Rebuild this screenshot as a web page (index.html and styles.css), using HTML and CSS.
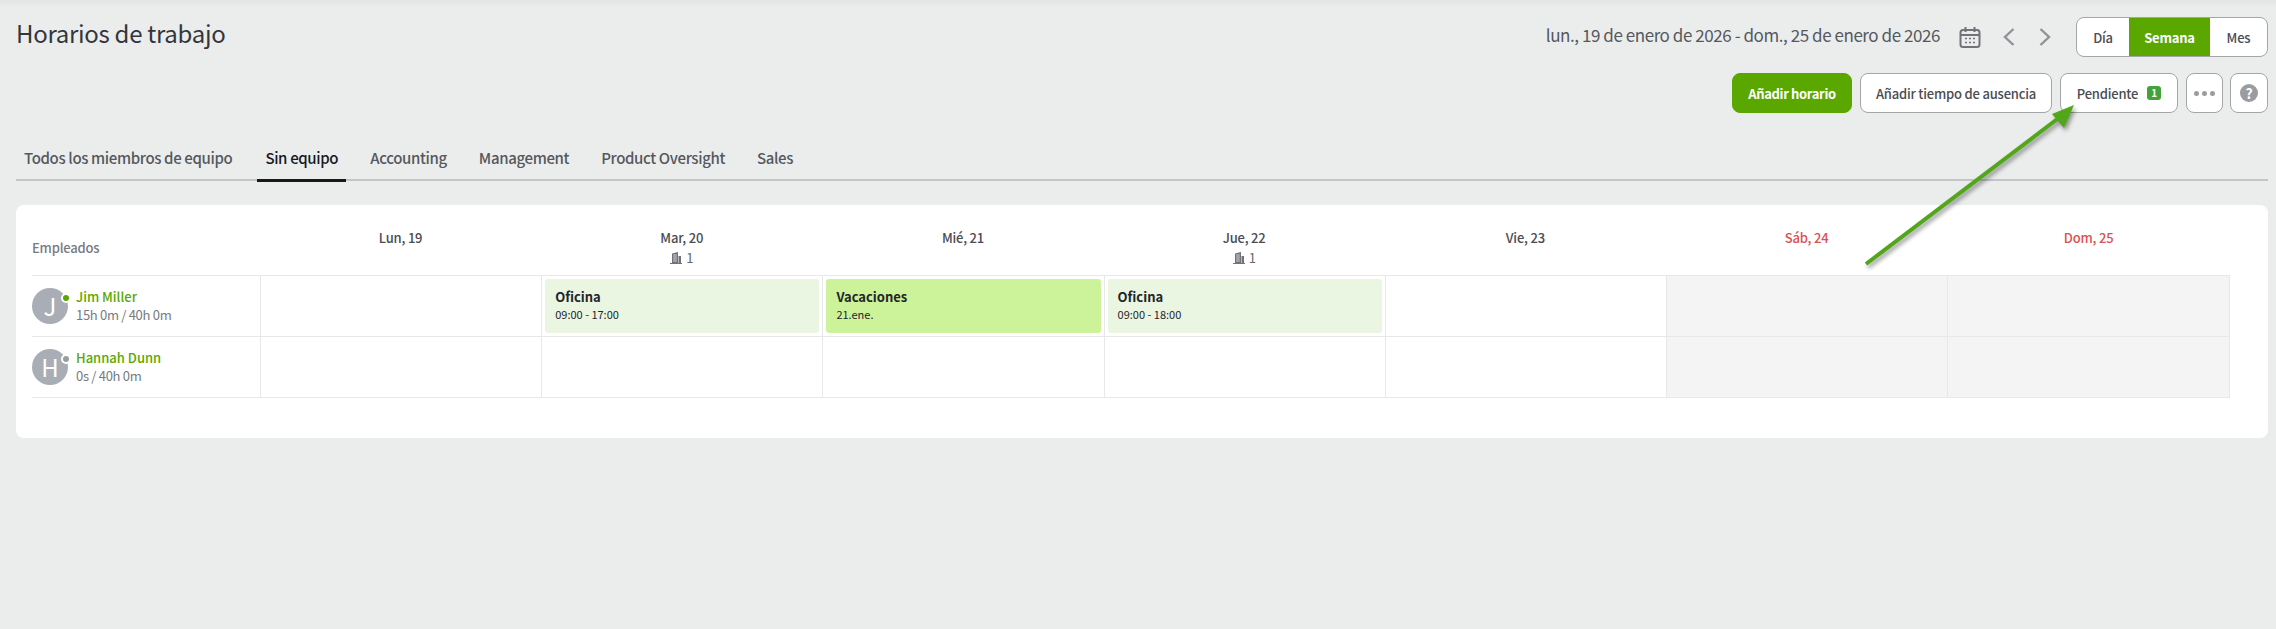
FILE: index.html
```html
<!DOCTYPE html>
<html lang="es">
<head>
    <meta charset="UTF-8" />
    <meta name="viewport" content="width=device-width, initial-scale=1" />
    <title>Horarios de trabajo</title>
    <link rel="stylesheet" href="styles.css">
</head>
<body>
<div class="page">
    <div class="top-row">
        <h1>Horarios de trabajo</h1>
        <div class="date-nav">
            <span class="date-range">lun., 19 de enero de 2026 - dom., 25 de enero de 2026</span>
            <svg class="cal-icon" width="22" height="22" viewBox="0 0 22 22" fill="none" stroke="#707378" stroke-width="2">
                <rect x="1.5" y="4" width="19" height="17" rx="2.5" />
                <path d="M1.5 9h19M6.5 1v5M15.5 1v5" />
                <path d="M6 12.5h2M10 12.5h2M14 12.5h2M6 16.5h2M10 16.5h2M14 16.5h2" stroke-width="1.5" />
            </svg>
            <svg class="chev" width="12" height="18" viewBox="0 0 12 18" fill="none" stroke="#8f9296" stroke-width="2.4"><path d="M10.5 1L2 9l8.5 8" /></svg>
            <svg class="chev chev-next" width="12" height="18" viewBox="0 0 12 18" fill="none" stroke="#8f9296" stroke-width="2.4"><path d="M1.5 1L10 9l-8.5 8" /></svg>
            <div class="segment">
                <div class="seg seg-day">Día</div>
                <div class="seg seg-week active">Semana</div>
                <div class="seg seg-month">Mes</div>
            </div>
        </div>
    </div>

    <div class="actions">
        <button class="btn primary btn-add">Añadir horario</button>
        <button class="btn btn-absence">Añadir tiempo de ausencia</button>
        <button class="btn btn-pending">Pendiente <span class="badge">1</span></button>
        <button class="btn btn-more"><i></i><i></i><i></i></button>
        <button class="btn btn-help"><span class="help-dot">?</span></button>
    </div>

    <div class="tabs">
        <div class="tab tab-all">Todos los miembros de equipo</div>
        <div class="tab active">Sin equipo</div>
        <div class="tab">Accounting</div>
        <div class="tab">Management</div>
        <div class="tab">Product Oversight</div>
        <div class="tab">Sales</div>
    </div>

    <div class="card">
        <div class="schedule">
            <div class="head head-emp">Empleados</div>
            <div class="head">Lun, 19</div>
            <div class="head">Mar, 20
                <div class="office">
                    <svg width="12" height="12" viewBox="0 0 12 12" fill="#707378"><path d="M2 1.5L8 0v12H2zM8.5 4H11v8H8.5zM0 11h12v1H0z" /><path d="M3.2 3h3.6M3.2 5h3.6M3.2 7h3.6M3.2 9h3.6" stroke="#fff" stroke-width=".7" /></svg>
                    1
                </div>
            </div>
            <div class="head">Mié, 21</div>
            <div class="head">Jue, 22
                <div class="office">
                    <svg width="12" height="12" viewBox="0 0 12 12" fill="#707378"><path d="M2 1.5L8 0v12H2zM8.5 4H11v8H8.5zM0 11h12v1H0z" /><path d="M3.2 3h3.6M3.2 5h3.6M3.2 7h3.6M3.2 9h3.6" stroke="#fff" stroke-width=".7" /></svg>
                    1
                </div>
            </div>
            <div class="head">Vie, 23</div>
            <div class="head weekend-head">Sáb, 24</div>
            <div class="head weekend-head">Dom, 25</div>

            <div class="cell emp">
                <div class="avatar">J<span class="status online"></span></div>
                <div>
                    <div class="emp-name">Jim Miller</div>
                    <div class="emp-hours">15h 0m / 40h 0m</div>
                </div>
            </div>
            <div class="cell"></div>
            <div class="cell"><div class="shift"><b>Oficina</b><span>09:00 - 17:00</span></div></div>
            <div class="cell"><div class="shift vacation"><b>Vacaciones</b><span>21.ene.</span></div></div>
            <div class="cell"><div class="shift"><b>Oficina</b><span>09:00 - 18:00</span></div></div>
            <div class="cell"></div>
            <div class="cell weekend"></div>
            <div class="cell weekend last"></div>

            <div class="cell emp">
                <div class="avatar">H<span class="status"></span></div>
                <div>
                    <div class="emp-name">Hannah Dunn</div>
                    <div class="emp-hours">0s / 40h 0m</div>
                </div>
            </div>
            <div class="cell"></div>
            <div class="cell"></div>
            <div class="cell"></div>
            <div class="cell"></div>
            <div class="cell"></div>
            <div class="cell weekend"></div>
            <div class="cell weekend last"></div>
        </div>
    </div>
</div>

<!-- annotation arrow drawn over the screenshot -->
<svg class="arrow" width="2276" height="629" viewBox="0 0 2276 629">
    <path d="M1866 264L2060 117" stroke="#52a61a" stroke-width="4" fill="none" />
    <path d="M2074 105L2052 114L2064 128z" fill="#52a61a" />
</svg>
</body>
</html>
```

FILE: styles.css
```css
* {
  box-sizing: border-box;
}
body {
  margin: 0;
  height: 629px;
  overflow: hidden;
  font-family: "Noto Sans CJK SC", "Noto Sans", sans-serif;
  background: linear-gradient(#e3e4e4, #ebeded 8px);
  color: #4a4d52;
}
.page {
  padding: 17px 8px 0 16px;
}
.top-row {
  display: flex;
  justify-content: space-between;
  height: 40px;
}
h1 {
  margin: 0;
  font-size: 24px;
  font-weight: 400;
  line-height: 31px;
  letter-spacing: -0.3px;
  color: #33363b;
}
.date-nav {
  display: flex;
  align-items: center;
}
.date-range {
  font-size: 17px;
  letter-spacing: -0.44px;
  color: #55585d;
  margin-top: -5px;
}
.cal-icon {
  margin: -1px 0 0 19px;
}
.chev {
  margin: -1px 0 0 22px;
}
.chev-next {
  margin-left: 24px;
}
.segment {
  display: flex;
  height: 40px;
  margin-left: 25px;
  border: 1px solid #a3a5a8;
  border-radius: 8px;
  background: #fff;
  overflow: hidden;
}
.seg {
  display: flex;
  align-items: center;
  justify-content: center;
  font-size: 13px;
  font-weight: 500;
  letter-spacing: -0.2px;
}
.seg-day { width: 52px; }
.seg-week { width: 81px; }
.seg-month { width: 57px; }
.seg.active {
  background: #5aa700;
  color: #fff;
  font-weight: 700;
}
.actions {
  display: flex;
  justify-content: flex-end;
  gap: 8px;
  margin-top: 16px;
}
.btn {
  display: flex;
  align-items: center;
  justify-content: center;
  height: 40px;
  padding: 0;
  border: 1px solid #a3a5a8;
  border-radius: 8px;
  background: #fff;
  font-family: inherit;
  font-size: 13px;
  font-weight: 500;
  letter-spacing: -0.2px;
  color: #4a4d52;
}
.btn.primary {
  background: #5aa700;
  border-color: #5aa700;
  color: #fff;
  font-weight: 700;
  letter-spacing: -0.35px;
}
.btn-add { width: 120px; }
.btn-absence { width: 192px; }
.btn-pending { width: 118px; }
.btn-more { width: 37px; gap: 3px; }
.btn-help { width: 38px; margin-left: -1px; }
.btn-more i {
  width: 5px;
  height: 5px;
  border-radius: 50%;
  background: #9a9c9f;
}
.badge {
  width: 14px;
  height: 14px;
  margin-left: 9px;
  border-radius: 3px;
  background: #43a23c;
  color: #fff;
  font-size: 10px;
  font-weight: 700;
  line-height: 14px;
}
.help-dot {
  width: 18px;
  height: 18px;
  border-radius: 50%;
  background: #9a9c9f;
  color: #fff;
  font-size: 14px;
  font-weight: 700;
  line-height: 18px;
}
.tabs {
  display: flex;
  gap: 16px;
  height: 68px;
  padding-top: 31px;
  border-bottom: 2px solid #c2c4c8;
}
.tab {
  height: 38px;
  padding: 0 8px;
  font-size: 15px;
  font-weight: 500;
  line-height: 28px;
  letter-spacing: -0.36px;
  color: #55585d;
}
.tab-all {
  margin-right: 1px;
}
.tab.active {
  border-bottom: 3px solid #16181d;
  color: #16181d;
}
.card {
  height: 233px;
  margin-top: 24px;
  padding: 0 38px 0 16px;
  border-radius: 8px;
  background: #fff;
}
.schedule {
  display: grid;
  grid-template-columns: 228px repeat(6, 281.2px) 1fr;
  grid-template-rows: 71px 61px 61px;
}
.head {
  padding-top: 23px;
  font-size: 13px;
  font-weight: 500;
  line-height: 20px;
  letter-spacing: -0.2px;
  text-align: center;
  color: #4a4d52;
  border-bottom: 1px solid #e8e8e8;
}
.head-emp {
  padding-top: 33px;
  text-align: left;
  color: #777a7f;
}
.weekend-head {
  color: #dc5050;
}
.office {
  display: flex;
  align-items: center;
  justify-content: center;
  gap: 4px;
  font-size: 13px;
  font-weight: 400;
  line-height: 20px;
  color: #66696e;
}
.cell {
  padding: 3px;
  border-left: 1px solid #e8e8e8;
  border-bottom: 1px solid #e8e8e8;
}
.cell.emp {
  display: flex;
  align-items: center;
  gap: 8px;
  padding: 0;
  border-left: 0;
}
.cell.weekend {
  background: #f4f4f4;
}
.cell.last {
  border-right: 1px solid #e8e8e8;
}
.avatar {
  position: relative;
  width: 36px;
  height: 36px;
  border-radius: 50%;
  background: #a9adb5;
  color: #fff;
  font-size: 24px;
  line-height: 36px;
  text-align: center;
}
.status {
  position: absolute;
  top: 5px;
  right: -3px;
  width: 10px;
  height: 10px;
  border: 2px solid #fff;
  border-radius: 50%;
  background: #9a9c9f;
}
.status.online {
  background: #5aa700;
}
.emp-name {
  font-size: 13px;
  font-weight: 500;
  line-height: 18px;
  color: #5aa700;
}
.emp-hours {
  font-size: 13px;
  line-height: 18px;
  letter-spacing: -0.3px;
  color: #777a7f;
}
.shift {
  height: 54px;
  padding: 9px 10px;
  border-radius: 3px;
  background: #eaf5e2;
  color: #22252a;
}
.shift.vacation {
  background: #cdf39a;
}
.shift b {
  display: block;
  font-size: 13px;
  font-weight: 700;
  line-height: 18px;
}
.shift span {
  display: block;
  font-size: 11px;
  line-height: 16px;
}
.arrow {
  position: absolute;
  top: 0;
  left: 0;
  filter: drop-shadow(2px 3px 2px rgba(0,0,0,0.4));
  pointer-events: none;
}
```
